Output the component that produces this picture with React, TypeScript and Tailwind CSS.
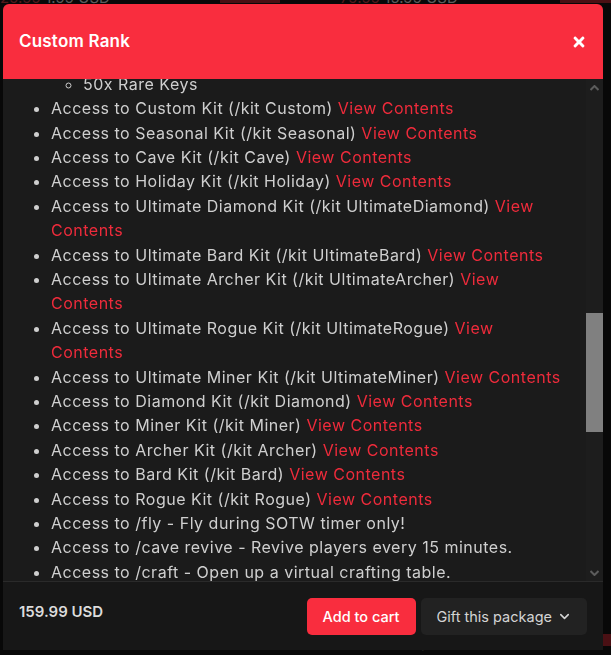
import { useLayoutEffect, useRef } from "react";
import { FaTimes } from "react-icons/fa";
import { FiChevronDown } from "react-icons/fi";

type Kit = { name: string; cmd: string };

const kits: Kit[] = [
  { name: "Custom", cmd: "Custom" },
  { name: "Seasonal", cmd: "Seasonal" },
  { name: "Cave", cmd: "Cave" },
  { name: "Holiday", cmd: "Holiday" },
  { name: "Ultimate Diamond", cmd: "UltimateDiamond" },
  { name: "Ultimate Bard", cmd: "UltimateBard" },
  { name: "Ultimate Archer", cmd: "UltimateArcher" },
  { name: "Ultimate Rogue", cmd: "UltimateRogue" },
  { name: "Ultimate Miner", cmd: "UltimateMiner" },
  { name: "Diamond", cmd: "Diamond" },
  { name: "Miner", cmd: "Miner" },
  { name: "Archer", cmd: "Archer" },
  { name: "Bard", cmd: "Bard" },
  { name: "Rogue", cmd: "Rogue" },
];

const perksBefore = [
  "Custom prefix in chat (created by staff)",
  "Custom chat color and name color",
  "Priority queue when the server is full",
  "Reserved slot on every map",
  "5 Lives on every map",
  "Access to /fix all",
  "Access to /feed",
  "Access to /near",
  "Access to /ec",
  "Access to /nick",
];

const perksAfter = [
  "Access to /fly - Fly during SOTW timer only!",
  "Access to /cave revive - Revive players every 15 minutes.",
  "Access to /craft - Open up a virtual crafting table.",
  "Access to /rename - Rename any item in your hand.",
  "Access to /skull - Get the head of any player.",
  "Access to /anvil - Open up a virtual anvil.",
  "Access to /back - Return to your last location.",
  "Access to /hat - Wear any block as a hat.",
  "Access to /lfa - Look for a faction to join.",
  "Access to /glow - Make your name glow in tab.",
  "Access to /tags - Choose from every chat tag.",
  "Access to /pv 5 - Five private vaults.",
  "Access to /reclaim - Claim your perks every map.",
  "Custom rank role on our Discord server.",
];

function BackgroundPage() {
  return (
    <div className="min-h-screen bg-[#0e0e0e] font-['Inter',sans-serif] text-[#9a9a9a] text-[15px]">
      <div className="grid grid-cols-[300px_311px]">
        <div className="flex items-center justify-between h-[8px] -mt-[6px]">
          <span className="text-[#8a2a30]">29.99 <span className="text-[#999]">1.99 USD</span></span>
          <span className="w-[60px] h-[10px] bg-[#7c1c22] mr-[20px]" />
        </div>
        <div className="flex items-center justify-between h-[8px] -mt-[6px] pl-[40px]">
          <span className="text-[#8a2a30]">79.99 <span className="text-[#999]">15.99 USD</span></span>
          <span className="w-[51px] h-[10px] bg-[#7c1c22]" />
        </div>
      </div>
      <div className="h-[632px]" />
      <div className="flex justify-end items-start gap-[115px]">
        <span className="text-[#999]">Custom Rank</span>
        <span className="w-[51px] h-[12px] bg-[#7c1c22]" />
      </div>
    </div>
  );
}

function ScrollArrow({ dir }: { dir: "up" | "down" }) {
  return (
    <div className="h-[17px] flex items-center justify-center">
      <svg width="9" height="6" viewBox="0 0 9 6" className={dir === "down" ? "rotate-180" : ""}>
        <path d="M0.5 5 L4.5 1 L8.5 5" fill="none" stroke="#5c5c5c" strokeWidth="2" />
      </svg>
    </div>
  );
}

export default function App() {
  const bodyRef = useRef<HTMLDivElement>(null);
  const markRef = useRef<HTMLLIElement>(null);

  useLayoutEffect(() => {
    if (bodyRef.current && markRef.current) {
      bodyRef.current.scrollTop = markRef.current.offsetTop + 7;
    }
  }, []);

  return (
    <div className="relative w-[611px] h-[655px] overflow-hidden">
      <BackgroundPage />

      {/* Overlay + modal */}
      <div className="fixed inset-0 bg-black/40 flex pt-[4px] pl-[3px] pr-[8px] pb-[5px] font-['Inter',sans-serif]">
        <div className="flex-1 flex flex-col rounded-t-[6px] overflow-hidden bg-[#1b1b1b]">
          {/* Title bar */}
          <div className="h-[75px] shrink-0 bg-[#f92d3e] flex items-center justify-between px-4">
            <h2 className="text-white text-[17px] font-semibold tracking-[0.2px]">Custom Rank</h2>
            <FaTimes className="text-white" size={16} />
          </div>

          {/* Content + scrollbar */}
          <div className="flex-1 min-h-0 flex">
            <div
              ref={bodyRef}
              className="relative flex-1 min-w-0 overflow-y-scroll [scrollbar-width:none] pl-4 pr-[19px] pt-4 pb-5 text-[16px] leading-[24.4px] tracking-[0.5px] text-[#cfcfcf]"
            >
              <p className="mb-3">
                The Custom Rank is the highest rank available on the network. Purchasing it gives you every perk of the
                lower ranks along with your very own custom prefix.
              </p>
              <p className="mb-3 font-semibold text-white">Rank Perks:</p>
              <ul className="list-disc pl-8">
                {perksBefore.map((p) => (
                  <li key={p}>{p}</li>
                ))}
                <li>
                  Monthly key rewards:
                  <ul className="list-[circle] pl-8">
                    <li>3x Legendary Keys</li>
                    <li>5x Koth Keys</li>
                    <li>10x Epic Keys</li>
                    <li>25x Ultra Keys</li>
                  </ul>
                </li>
                <li>
                  Keys on every map:
                  <ul className="list-[circle] pl-8">
                    <li>5x Legendary Keys</li>
                    <li>10x Koth Keys</li>
                    <li>15x Epic Keys</li>
                    <li>25x Ultra Keys</li>
                    <li ref={markRef}>50x Rare Keys</li>
                  </ul>
                </li>
                {kits.map((k) => (
                  <li key={k.cmd}>
                    Access to {k.name} Kit (/kit {k.cmd}){" "}
                    <a className="text-[#ee2b3b] cursor-pointer">View Contents</a>
                  </li>
                ))}
                {perksAfter.map((p) => (
                  <li key={p}>{p}</li>
                ))}
              </ul>
            </div>

            {/* Scrollbar */}
            <div className="w-[17px] shrink-0 flex flex-col bg-[#1d1d1d]">
              <ScrollArrow dir="up" />
              <div className="flex-1">
                <div className="mt-[217px] h-[119px] bg-[#808080]" />
              </div>
              <ScrollArrow dir="down" />
            </div>
          </div>

          {/* Footer */}
          <div className="h-[69px] shrink-0 border-t border-[#2a2a2a] bg-[#171717] flex items-start justify-between px-4 pt-[16px]">
            <span className="mt-[3px] text-[15px] font-semibold text-[#dcdcdc]">159.99 USD</span>
            <div className="flex gap-[5px]">
              <button className="h-[37px] px-4 rounded-[5px] bg-[#f92d3e] text-white text-[14.5px] font-medium">
                Add to cart
              </button>
              <button className="h-[37px] pl-4 pr-[15px] rounded-[5px] bg-[#222222] text-[#d4d4d4] text-[14.5px] flex items-center gap-[5px]">
                Gift this package
                <FiChevronDown size={15} strokeWidth={2.5} />
              </button>
            </div>
          </div>
        </div>
      </div>
    </div>
  );
}
